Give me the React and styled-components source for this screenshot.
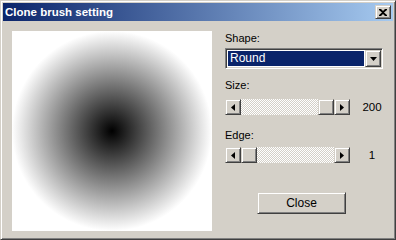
import styled, { createGlobalStyle } from "styled-components";

const FACE = "#d4d0c8";

const GlobalStyle = createGlobalStyle`
  html, body {
    margin: 0;
    padding: 0;
    background: ${FACE};
  }
  * {
    box-sizing: border-box;
  }
`;

const raised = `
  background: ${FACE};
  border-top: 1px solid ${FACE};
  border-left: 1px solid ${FACE};
  border-right: 1px solid #404040;
  border-bottom: 1px solid #404040;
  box-shadow: inset 1px 1px #fff, inset -1px -1px #808080;
`;

function ArrowLeft() {
  return (
    <svg width="4" height="7" viewBox="0 0 4 7">
      <path d="M4 0 L0 3.5 L4 7 Z" fill="#000" />
    </svg>
  );
}

function ArrowRight() {
  return (
    <svg width="4" height="7" viewBox="0 0 4 7">
      <path d="M0 0 L4 3.5 L0 7 Z" fill="#000" />
    </svg>
  );
}

function ArrowDown() {
  return (
    <svg width="7" height="4" viewBox="0 0 7 4">
      <path d="M0 0 L7 0 L3.5 4 Z" fill="#000" />
    </svg>
  );
}

function Slider({ value, min, max }) {
  const trackWidth = 125 - 32 - 16;
  const offset = Math.round(((value - min) / (max - min)) * trackWidth);
  return (
    <SliderRow>
      <ScrollBar>
        <ArrowButton>
          <ArrowLeft />
        </ArrowButton>
        <Track>
          <div style={{ width: offset }} />
          <Thumb />
        </Track>
        <ArrowButton>
          <ArrowRight />
        </ArrowButton>
      </ScrollBar>
      <Value>{value}</Value>
    </SliderRow>
  );
}

export default function App() {
  return (
    <>
      <GlobalStyle />
      <Window>
        <TitleBar>
          <Title>Clone brush setting</Title>
          <CloseBox>
            <svg width="8" height="7" viewBox="0 0 8 7">
              <path
                d="M0 0h2l2 2 2-2h2v1L5 3.5 8 6v1H6L4 5 2 7H0V6l3-2.5L0 1z"
                fill="#000"
              />
            </svg>
          </CloseBox>
        </TitleBar>
        <Body>
          <Preview />
          <Controls>
            <Label $top={1}>Shape:</Label>
            <Combo>
              <ComboValue>Round</ComboValue>
              <ComboButton>
                <ArrowDown />
              </ComboButton>
            </Combo>
            <Label $top={10}>Size:</Label>
            <Gap $h={7} />
            <Slider value={200} min={1} max={200} />
            <Label $top={14}>Edge:</Label>
            <Gap $h={5} />
            <Slider value={1} min={1} max={100} />
            <CloseButton>Close</CloseButton>
          </Controls>
        </Body>
      </Window>
    </>
  );
}

const Window = styled.div`
  width: 396px;
  height: 240px;
  display: flex;
  flex-direction: column;
  padding: 2px;
  background: ${FACE};
  border-top: 1px solid ${FACE};
  border-left: 1px solid ${FACE};
  border-right: 1px solid #404040;
  border-bottom: 1px solid #404040;
  box-shadow: inset 1px 1px #fff, inset -1px -1px #808080;
  font-family: "Liberation Sans", Arial, sans-serif;
  font-size: 11px;
  color: #000;
`;

const TitleBar = styled.div`
  height: 18px;
  display: flex;
  align-items: center;
  justify-content: space-between;
  padding: 0 2px;
  background: linear-gradient(to right, #0a246a, #a6caf0);
`;

const Title = styled.span`
  color: #fff;
  font-weight: bold;
  font-size: 11.5px;
`;

const CloseBox = styled.div`
  width: 16px;
  height: 14px;
  display: flex;
  align-items: center;
  justify-content: center;
  ${raised}
`;

const Body = styled.div`
  display: flex;
  gap: 13px;
  padding: 10px 0 0 9px;
`;

const Preview = styled.div`
  width: 200px;
  height: 200px;
  background: radial-gradient(circle 100px at center, #000 0%, #fff 100%);
`;

const Controls = styled.div`
  width: 158px;
  display: flex;
  flex-direction: column;
`;

const Label = styled.div`
  margin-top: ${(p) => p.$top}px;
  line-height: 13px;
  height: 13px;
`;

const Gap = styled.div`
  height: ${(p) => p.$h}px;
`;

const Combo = styled.div`
  margin-top: 3px;
  height: 21px;
  display: flex;
  padding: 1px;
  background: #fff;
  border-top: 1px solid #808080;
  border-left: 1px solid #808080;
  border-right: 1px solid #fff;
  border-bottom: 1px solid #fff;
  box-shadow: inset 1px 1px #404040, inset -1px -1px ${FACE};
`;

const ComboValue = styled.div`
  flex: 1;
  margin: 1px;
  padding-left: 2px;
  background: #0a246a;
  color: #fff;
  font-size: 12px;
  line-height: 15px;
`;

const ComboButton = styled.div`
  width: 16px;
  height: 17px;
  display: flex;
  align-items: center;
  justify-content: center;
  ${raised}
`;

const SliderRow = styled.div`
  display: flex;
  align-items: center;
  gap: 12px;
`;

const ScrollBar = styled.div`
  width: 125px;
  height: 16px;
  display: flex;
`;

const ArrowButton = styled.div`
  width: 16px;
  height: 16px;
  flex: none;
  display: flex;
  align-items: center;
  justify-content: center;
  ${raised}
`;

const Track = styled.div`
  flex: 1;
  display: flex;
  background: repeating-conic-gradient(${FACE} 0 25%, #fff 0 50%) 0 0 / 2px 2px;
`;

const Thumb = styled.div`
  width: 16px;
  height: 16px;
  ${raised}
`;

const Value = styled.div`
  width: 20px;
  text-align: center;
  font-size: 11.5px;
`;

const CloseButton = styled.button`
  margin: 29px 0 0 32px;
  width: 89px;
  height: 22px;
  padding: 0;
  font-family: inherit;
  font-size: 12px;
  color: #000;
  ${raised}
`;
